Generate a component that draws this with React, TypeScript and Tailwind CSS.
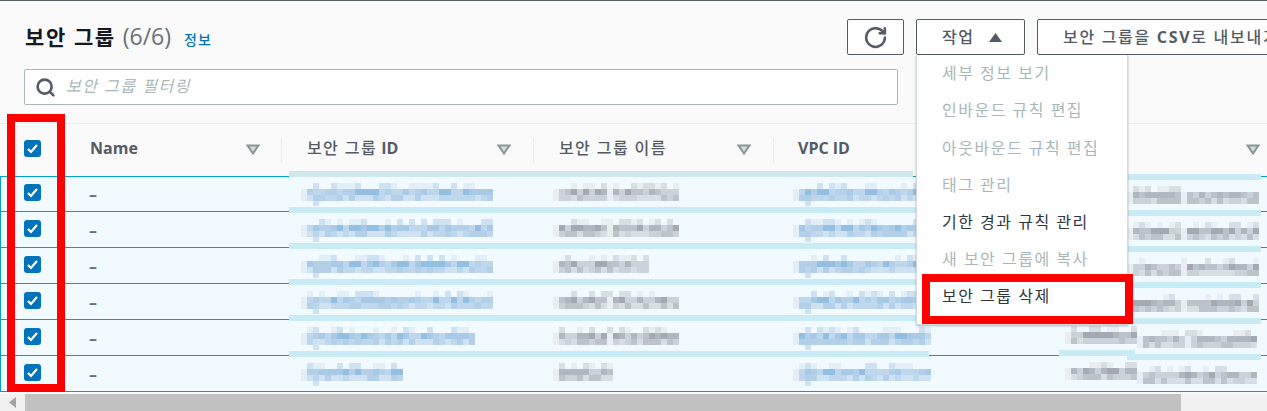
import React from 'react';
import { RotateCw, Search } from 'lucide-react';

const FONT = 'font-["Open_Sans","Noto_Sans_CJK_KR",sans-serif]';

const menuItems = [
  { label: '세부 정보 보기', enabled: false, h: 'h-[36px]' },
  { label: '인바운드 규칙 편집', enabled: false, h: 'h-[38px]' },
  { label: '아웃바운드 규칙 편집', enabled: false, h: 'h-[37px]' },
  { label: '태그 관리', enabled: false, h: 'h-[37px]' },
  { label: '기한 경과 규칙 관리', enabled: true, h: 'h-[37px]' },
  { label: '새 보안 그룹에 복사', enabled: false, h: 'h-[37px]' },
  { label: '보안 그룹 삭제', enabled: true, h: 'h-[37px]' },
];

// first row is a pixel shorter than the others in the capture
const rows = [
  { h: 'h-[35px]', pad: 'pt-[7px]' },
  { h: 'h-[36px]', pad: 'pt-[8px]' },
  { h: 'h-[36px]', pad: 'pt-[8px]' },
  { h: 'h-[36px]', pad: 'pt-[8px]' },
  { h: 'h-[36px]', pad: 'pt-[8px]' },
  { h: 'h-[36px]', pad: 'pt-[8px]' },
];

const Checkbox = () => (
  <div className="w-[17px] h-[17px] rounded-[3px] bg-[#0073bb] flex items-center justify-center shrink-0">
    <svg width="13" height="13" viewBox="0 0 13 13" fill="none">
      <path d="M2 7l3 3 6-7" stroke="#fff" strokeWidth="2.2" />
    </svg>
  </div>
);

const SortIcon = () => (
  <svg width="14" height="11" viewBox="0 0 14 11" className="shrink-0 -mt-px">
    <path d="M1.5 1.5h11L7 9.5z" fill="#d5dbdb" stroke="#879596" strokeWidth="2" />
  </svg>
);

const HeaderCell = ({ label, suffix, className, bold }: { label: string; suffix?: string; className: string; bold?: boolean }) => (
  <div className={`flex items-center justify-between h-[25px] ${className}`}>
    <span className={`${bold ? 'font-bold' : 'font-medium tracking-[1.4px]'} text-[16px] -mt-1 text-[#545b64] whitespace-nowrap`}>
      {label}
      {suffix && <span className="font-bold tracking-normal"> {suffix}</span>}
    </span>
    <SortIcon />
  </div>
);

// small seeded generator so the redacted mosaic stays the same on every load
const rand = (seed: number) => {
  let s = seed;
  return () => {
    s = (s * 1664525 + 1013904223) % 4294967296;
    return s / 4294967296;
  };
};

const blues = ['#e2eef8', '#cfe2f2', '#bfd7ec', '#b3d0e8', '#a8cae6', '#93bfe2'];
const grays = ['#e9eef0', '#d8dfe3', '#cbd3d8', '#bcc4ca', '#b0b8bf', '#a5aab1'];

type Patch = { x: number; y: number; cells: number; palette: string[]; seed: number; tail?: boolean; gap?: number };

const patches: Patch[] = [
  { x: 301, y: 183, cells: 32, palette: blues, seed: 11, tail: true },
  { x: 301, y: 219, cells: 32, palette: blues, seed: 12, tail: true },
  { x: 301, y: 255, cells: 32, palette: blues, seed: 13, tail: true },
  { x: 301, y: 291, cells: 32, palette: blues, seed: 14, tail: true },
  { x: 301, y: 327, cells: 29, palette: blues, seed: 15, tail: true },
  { x: 301, y: 363, cells: 17, palette: blues, seed: 16, tail: true },
  { x: 553, y: 183, cells: 21, palette: grays, seed: 21, gap: 9 },
  { x: 553, y: 219, cells: 21, palette: grays, seed: 22, gap: 9 },
  { x: 553, y: 255, cells: 16, palette: grays, seed: 23 },
  { x: 553, y: 291, cells: 21, palette: grays, seed: 24, gap: 9 },
  { x: 553, y: 327, cells: 21, palette: grays, seed: 25, gap: 9 },
  { x: 553, y: 363, cells: 10, palette: grays, seed: 26 },
  { x: 793, y: 183, cells: 21, palette: blues, seed: 31, tail: true },
  { x: 793, y: 219, cells: 21, palette: blues, seed: 32, tail: true },
  { x: 793, y: 255, cells: 21, palette: blues, seed: 33, tail: true },
  { x: 793, y: 291, cells: 21, palette: blues, seed: 34, tail: true },
  { x: 793, y: 327, cells: 23, palette: blues, seed: 35, tail: true },
  { x: 793, y: 363, cells: 23, palette: blues, seed: 36, tail: true },
  { x: 1065, y: 326, cells: 12, palette: grays, seed: 41 },
  { x: 1065, y: 362, cells: 12, palette: grays, seed: 42 },
  { x: 1127, y: 186, cells: 22, palette: grays, seed: 51, gap: 9 },
  { x: 1127, y: 222, cells: 22, palette: grays, seed: 52, gap: 9 },
  { x: 1127, y: 258, cells: 22, palette: grays, seed: 53, gap: 9 },
  { x: 1127, y: 294, cells: 22, palette: grays, seed: 54, gap: 9 },
  { x: 1137, y: 330, cells: 20, palette: grays, seed: 55, gap: 8 },
  { x: 1137, y: 366, cells: 20, palette: grays, seed: 56 },
];

const bars = [
  { x: 289, y: 171, w: 624, c: '#cfe8ee' },
  { x: 289, y: 207, w: 630, c: '#c9ebf5' },
  { x: 289, y: 243, w: 630, c: '#c9ebf5' },
  { x: 289, y: 279, w: 630, c: '#c9ebf5' },
  { x: 289, y: 315, w: 630, c: '#c9ebf5' },
  { x: 289, y: 351, w: 640, c: '#c9ebf5' },
  { x: 1059, y: 350, w: 76, c: '#c9ebf5' },
  { x: 1127, y: 174, w: 134, c: '#c9ebf5' },
  { x: 1127, y: 210, w: 134, c: '#c9ebf5' },
  { x: 1127, y: 246, w: 134, c: '#c9ebf5' },
  { x: 1127, y: 282, w: 134, c: '#c9ebf5' },
  { x: 1127, y: 318, w: 134, c: '#c9ebf5' },
  { x: 1127, y: 354, w: 134, c: '#c9ebf5' },
];

const Redaction = () => (
  <svg width="1267" height="411" className="absolute top-0 left-0" shapeRendering="crispEdges">
    {bars.map((b) => (
      <rect key={`${b.x}-${b.y}`} x={b.x} y={b.y} width={b.w} height={6} fill={b.c} />
    ))}
    {patches.map((p) => {
      const r = rand(p.seed);
      const out: React.ReactNode[] = [];
      for (let i = 0; i < p.cells; i++) {
        const soft = i === 0 || i === p.gap;
        // top line is sparse and pale, the two lower lines carry the tone
        if (r() > 0.5) {
          out.push(<rect key={`t${i}`} x={p.x + i * 6} y={p.y} width={6} height={6} fill={p.palette[Math.floor(r() * 2)]} />);
        }
        out.push(<rect key={`m${i}`} x={p.x + i * 6} y={p.y + 6} width={6} height={6} fill={p.palette[soft ? 0 : 2 + Math.floor(r() * 4)]} />);
        out.push(<rect key={`b${i}`} x={p.x + i * 6} y={p.y + 12} width={6} height={6} fill={p.palette[soft ? 0 : 1 + Math.floor(r() * 3)]} />);
      }
      if (p.tail) {
        out.push(<rect key="tail" x={p.x + 12} y={p.y + 18} width={6} height={5} fill={p.palette[1]} />);
      }
      return <g key={p.seed}>{out}</g>;
    })}
  </svg>
);

const ActionsMenu = () => (
  <div className="absolute left-[916px] top-[55px] w-[212px] h-[270px] bg-white border border-t-0 border-[#d5dbdb] shadow-[0_1px_2px_rgba(0,28,36,0.3)] flex flex-col">
    {menuItems.map((item) => (
      <div
        key={item.label}
        className={`${item.h} flex items-center pl-[25px] text-[16px] tracking-[1.5px] whitespace-nowrap ${item.enabled ? 'text-[#30363c]' : 'text-[#aab7b8]'}`}
      >
        {item.label}
      </div>
    ))}
  </div>
);

export default function App() {
  return (
    <div className={`relative w-[1267px] h-[411px] overflow-hidden bg-[#fafafa] ${FONT}`}>
      <div className="h-px bg-[#545b64]" />

      {/* page header */}
      <div className="h-[122px] pl-6 flex flex-col">
        <div className="flex items-start h-[68px] pt-[18px]">
          <div className="flex items-baseline w-[823px] shrink-0 pl-px">
            <h1 className="text-[21px] font-bold tracking-[1.6px] text-[#16191f] whitespace-nowrap">보안 그룹</h1>
            <span className="ml-[7px] text-[23px] text-[#687078]">(6/6)</span>
            <span className="ml-[13px] text-[14px] tracking-[1px] font-medium text-[#0073bb]">정보</span>
          </div>
          <button className="w-[57px] h-9 shrink-0 border border-[#545b64] rounded-[2px] bg-white flex items-center justify-center">
            <RotateCw size={25} strokeWidth={2.4} className="text-[#545b64]" />
          </button>
          <button className="ml-3 w-[109px] h-9 shrink-0 border border-[#545b64] rounded-[2px] bg-white flex items-center pl-[25px] gap-[14px] text-[16px] tracking-[1.6px] font-medium text-[#545b64]">
            작업
            <svg width="13" height="9" viewBox="0 0 13 9"><path d="M6.5 0L13 9H0z" fill="#545b64" /></svg>
          </button>
          <button className="ml-3 h-9 shrink-0 border border-[#545b64] rounded-[2px] bg-white px-[25px] text-[16px] tracking-[1.7px] font-medium text-[#545b64] whitespace-nowrap">
            보안 그룹을 <span className="font-bold">CSV</span>로 내보내기
          </button>
        </div>
        <div className="w-[874px] h-9 border border-[#aab7b8] rounded-[2px] bg-white flex items-center pl-[10px] gap-[10px]">
          <Search size={21} strokeWidth={3} className="text-[#545b64] shrink-0" />
          <span className="text-[16px] italic tracking-[1.5px] -mt-0.5 text-[#aab7b8]">보안 그룹 필터링</span>
        </div>
      </div>

      {/* table header */}
      <div className="h-[53px] border-t border-[#eaeded] grid grid-cols-[66px_216px_252px_240px_1fr] items-center">
        <div className="pl-6 pb-1 h-[25px] flex items-center border-r border-[#eaeded]"><Checkbox /></div>
        <HeaderCell label="Name" bold className="pl-6 pr-[21px] border-r border-[#eaeded]" />
        <HeaderCell label="보안 그룹" suffix="ID" className="pl-[25px] pr-[22px] border-r border-[#eaeded]" />
        <HeaderCell label="보안 그룹 이름" className="pl-[25px] pr-[22px] border-r border-[#eaeded]" />
        <HeaderCell label="VPC ID" bold className="pl-6 pr-[7px]" />
      </div>

      {/* table body */}
      <div className="flex flex-col border-b border-[#00a1c9]">
        {rows.map((row, i) => (
          <div key={i} className={`${row.h} ${row.pad} border-t border-l border-[#00a1c9] bg-[#f1faff] flex items-start pl-[23px]`}>
            <Checkbox />
            <span className="ml-[48px] text-[16px] leading-[20px] font-bold text-[#687078]">–</span>
          </div>
        ))}
      </div>

      {/* scrollbar */}
      <div className="mt-[2px] h-[17px] bg-[#f1f1f1] flex items-stretch">
        <div className="w-[25px] flex items-center justify-center shrink-0">
          <svg width="7" height="11" viewBox="0 0 7 11"><path d="M7 0v11L0 5.5z" fill="#a3a3a3" /></svg>
        </div>
        <div className="w-[1156px] bg-[#c1c1c1]" />
      </div>

      <Redaction />
      <ActionsMenu />

      {/* red annotation boxes */}
      <div className="absolute left-[7px] top-[114px] w-[58px] h-[278px] border-8 border-[#ff0000]" />
      <div className="absolute left-[922px] top-[274px] w-[211px] h-[50px] border-8 border-[#ff0000]" />
    </div>
  );
}
